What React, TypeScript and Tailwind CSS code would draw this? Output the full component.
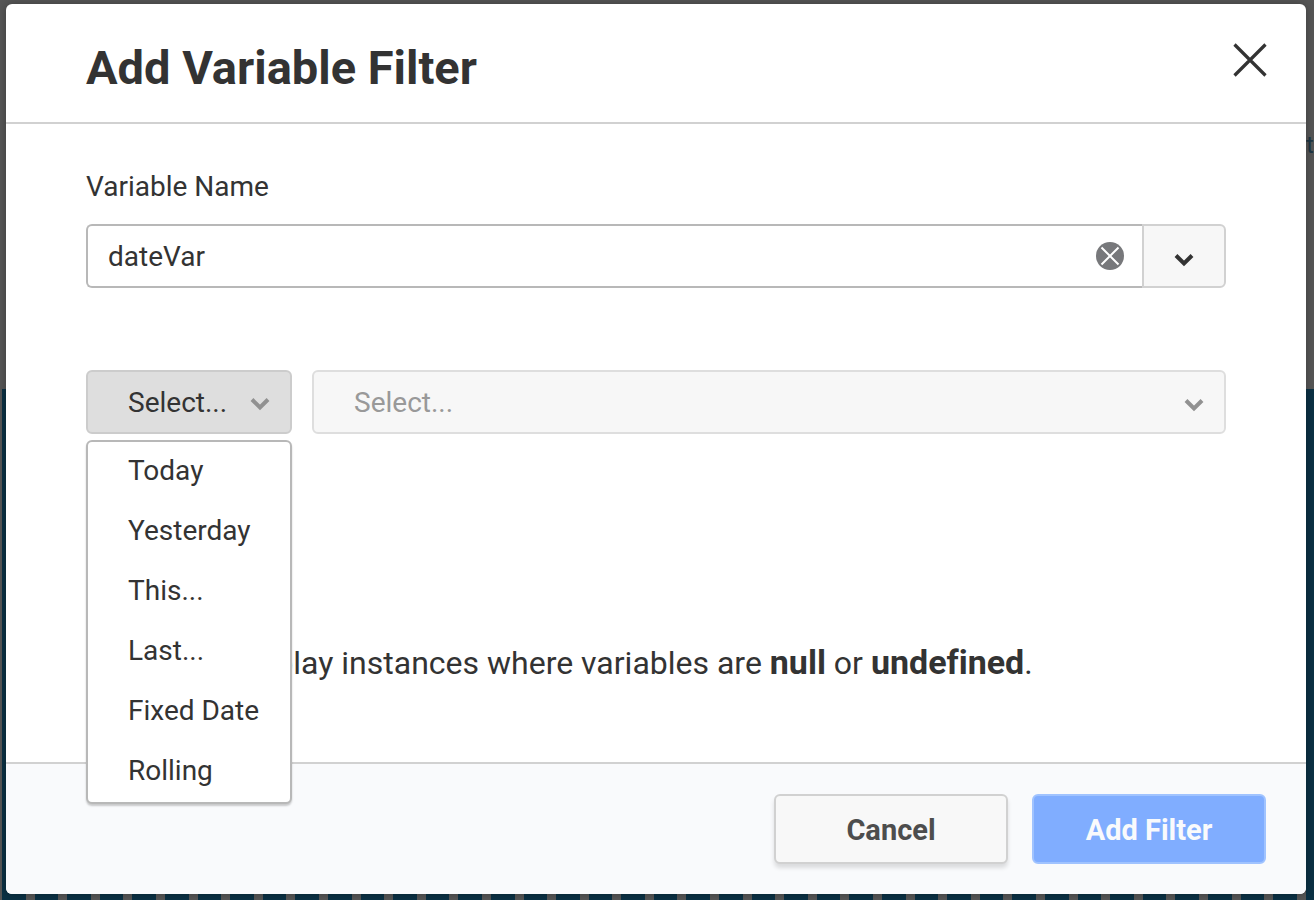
import { useState } from "react";

const OPERATORS = ["Today", "Yesterday", "This...", "Last...", "Fixed Date", "Rolling"];

const Chevron = ({ className }: { className: string }) => (
    <svg viewBox="0 0 20 14" className={className} fill="none" stroke="currentColor" strokeWidth="4" aria-hidden="true">
        <path d="M2 2.5 L10 10.5 L18 2.5" />
    </svg>
);

// Dimmed report page behind the dialog
function Backdrop() {
    return (
        <div className="absolute inset-0 flex flex-col bg-[#565656]" aria-hidden="true">
            <div className="flex h-[389px] justify-end pt-[129px]">
                <span className="w-2 text-2xl text-[#1d3644]">t</span>
            </div>
            <div className="flex flex-1 gap-[9px] pl-0.5">
                {Array.from({ length: 40 }, (_, i) => (
                    <div key={i} className="flex-1 bg-[#0b3144]"></div>
                ))}
                <div className="w-2 bg-[#0b3144]"></div>
            </div>
        </div>
    );
}

export default function App() {
    const [variable, setVariable] = useState("dateVar");
    const [open, setOpen] = useState(true);
    const [operator, setOperator] = useState("Select...");

    return (
        <div className="relative flex min-h-screen pt-1 pr-2 pb-1.5 pl-1.5 font-['Roboto',sans-serif] text-[28px] leading-9 text-[#333]">
            <Backdrop />

            <div role="dialog" aria-labelledby="title" className="relative flex flex-1 flex-col rounded-md bg-white shadow-[0_0_8px_rgba(0,0,0,0.3)]">
                {/* Header */}
                <div className="flex items-start justify-between border-b-2 border-[#d1d1d1] pt-9 pr-9 pb-[26px] pl-20">
                    <h1 id="title" className="text-[47px] leading-[56px] font-bold">Add Variable Filter</h1>
                    <button type="button" aria-label="Close" className="size-10">
                        <svg viewBox="0 0 40 40" className="size-10" fill="none" stroke="#333" strokeWidth="3.2">
                            <path d="M4.5 4.5 L35.5 35.5 M35.5 4.5 L4.5 35.5" />
                        </svg>
                    </button>
                </div>

                {/* Body */}
                <div className="flex flex-1 flex-col px-20 pt-[45px] pb-[78px]">
                    <label htmlFor="variable">Variable Name</label>
                    <div className="mt-[19px] flex h-16">
                        <div className="flex flex-1 items-center rounded-l-md border-2 border-r-0 border-[#b8b8b8] pr-[18px]">
                            <input
                                id="variable"
                                type="text"
                                value={variable}
                                onChange={(e) => setVariable(e.target.value)}
                                className="min-w-0 flex-1 pt-0.5 pl-5 outline-none"
                            />
                            <button type="button" aria-label="Clear" onClick={() => setVariable("")}>
                                <svg viewBox="0 0 28 28" className="size-7" fill="none">
                                    <circle cx="14" cy="14" r="14" fill="#77787b" />
                                    <path d="M5.5 5.5 L22.5 22.5 M22.5 5.5 L5.5 22.5" stroke="#fff" strokeWidth="2" />
                                </svg>
                            </button>
                        </div>
                        <button type="button" aria-label="Show variables" className="flex w-[84px] items-center justify-center rounded-r-md border-2 border-[#d1d1d1] bg-[#f7f7f7] pt-2">
                            <Chevron className="h-3.5 w-5" />
                        </button>
                    </div>

                    <div className="mt-[82px] flex gap-5">
                        <div className="relative w-[206px]">
                            <button
                                type="button"
                                aria-haspopup="listbox"
                                aria-expanded={open}
                                onClick={() => setOpen(!open)}
                                className="flex h-16 w-full items-center justify-between rounded-md border-2 border-[#ccc] bg-[#dedede] pt-0.5 pr-5 pl-10"
                            >
                                {operator}
                                <Chevron className="mt-0.5 h-3.5 w-5 text-[#919191]" />
                            </button>
                            {open && (
                                <ul role="listbox" className="absolute top-[70px] left-0 z-10 w-full rounded-md border-2 border-[#b8b8b8] bg-white shadow-[0_2px_2px_rgba(0,0,0,0.2)]">
                                    {OPERATORS.map((name) => (
                                        <li
                                            key={name}
                                            role="option"
                                            aria-selected={name === operator}
                                            onClick={() => {
                                                setOperator(name);
                                                setOpen(false);
                                            }}
                                            className="flex h-[60px] items-center pb-0.5 pl-10"
                                        >
                                            {name}
                                        </li>
                                    ))}
                                </ul>
                            )}
                        </div>
                        <div className="relative flex-1">
                            <select disabled aria-label="Unit" className="h-16 w-full appearance-none rounded-md border-2 border-[#dedede] bg-[#f7f7f7] pt-0.5 pl-10 text-[#999] opacity-100">
                                <option>Select...</option>
                            </select>
                            <Chevron className="pointer-events-none absolute top-7 right-[22px] h-3.5 w-5 text-[#919191]" />
                        </div>
                    </div>

                    <p className="mt-52 pl-36 text-[32px] leading-10 [font-variant-ligatures:none]">
                        Display instances where variables are <b className="text-[34px]">null</b> or <b className="text-[34px]">undefined</b>.
                    </p>
                </div>

                {/* Footer */}
                <div className="flex justify-end gap-6 rounded-b-md border-t-2 border-[#d1d1d1] bg-[#f9fafc] px-10 py-[30px] text-[29px] font-bold">
                    <button type="button" className="h-[70px] w-[234px] rounded-md border-2 border-[#d1d1d1] bg-[#f8f8f8] pt-0.5 text-[#4d4d4d] shadow-[0_4px_4px_rgba(0,0,0,0.12)]">
                        Cancel
                    </button>
                    <button type="button" disabled className="h-[70px] w-[234px] rounded-md border-2 border-[#a0c3ff] bg-[#80adff] pt-0.5 text-[#f9fafc]">
                        Add Filter
                    </button>
                </div>
            </div>
        </div>
    );
}
